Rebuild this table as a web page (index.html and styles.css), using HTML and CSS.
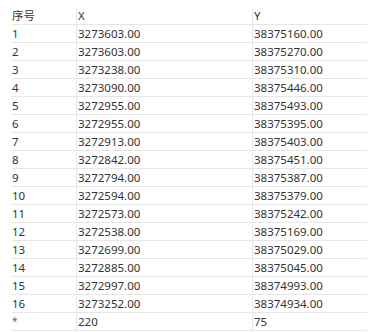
FILE: index.html
```html
<!DOCTYPE html>
<html lang="zh">
<head>
    <meta charset="UTF-8">
    <title>坐标表</title>
    <link rel="stylesheet" href="styles.css">
</head>
<body>
    <div class="grid">
        <div class="row head">
            <div class="cell">序号</div>
            <div class="cell">X</div>
            <div class="cell">Y</div>
        </div>
        <div class="row"><div class="cell">1</div><div class="cell">3273603.00</div><div class="cell">38375160.00</div></div>
        <div class="row"><div class="cell">2</div><div class="cell">3273603.00</div><div class="cell">38375270.00</div></div>
        <div class="row"><div class="cell">3</div><div class="cell">3273238.00</div><div class="cell">38375310.00</div></div>
        <div class="row"><div class="cell">4</div><div class="cell">3273090.00</div><div class="cell">38375446.00</div></div>
        <div class="row"><div class="cell">5</div><div class="cell">3272955.00</div><div class="cell">38375493.00</div></div>
        <div class="row"><div class="cell">6</div><div class="cell">3272955.00</div><div class="cell">38375395.00</div></div>
        <div class="row"><div class="cell">7</div><div class="cell">3272913.00</div><div class="cell">38375403.00</div></div>
        <div class="row"><div class="cell">8</div><div class="cell">3272842.00</div><div class="cell">38375451.00</div></div>
        <div class="row"><div class="cell">9</div><div class="cell">3272794.00</div><div class="cell">38375387.00</div></div>
        <div class="row"><div class="cell">10</div><div class="cell">3272594.00</div><div class="cell">38375379.00</div></div>
        <div class="row"><div class="cell">11</div><div class="cell">3272573.00</div><div class="cell">38375242.00</div></div>
        <div class="row"><div class="cell">12</div><div class="cell">3272538.00</div><div class="cell">38375169.00</div></div>
        <div class="row"><div class="cell">13</div><div class="cell">3272699.00</div><div class="cell">38375029.00</div></div>
        <div class="row"><div class="cell">14</div><div class="cell">3272885.00</div><div class="cell">38375045.00</div></div>
        <div class="row"><div class="cell">15</div><div class="cell">3272997.00</div><div class="cell">38374993.00</div></div>
        <div class="row"><div class="cell">16</div><div class="cell">3273252.00</div><div class="cell">38374934.00</div></div>
        <div class="row"><div class="cell star">*</div><div class="cell">220</div><div class="cell">75</div></div>
    </div>
</body>
</html>
```
FILE: styles.css
```css
body {
    margin: 0;
    background: #fff;
    font-family: "Noto Sans", "Noto Sans CJK SC", sans-serif;
    font-size: 11.5px;
    color: #333;
}
.grid {
    margin: 7px 0 0 12px;
    width: 355px;
}
.row {
    display: grid;
    grid-template-columns: 64px 176px 1fr;
    height: 17px;
    border-bottom: 1px solid #e6e6e6;
}
.cell {
    line-height: 17px;
    white-space: nowrap;
}
.cell + .cell {
    border-left: 1px solid #e6e6e6;
    padding-left: 1px;
}
.head .cell + .cell {
    border-image: linear-gradient(to bottom, transparent 1px, #e6e6e6 1px) 1;
}
.star {
    font-size: 10px;
    color: #666;
}
```
